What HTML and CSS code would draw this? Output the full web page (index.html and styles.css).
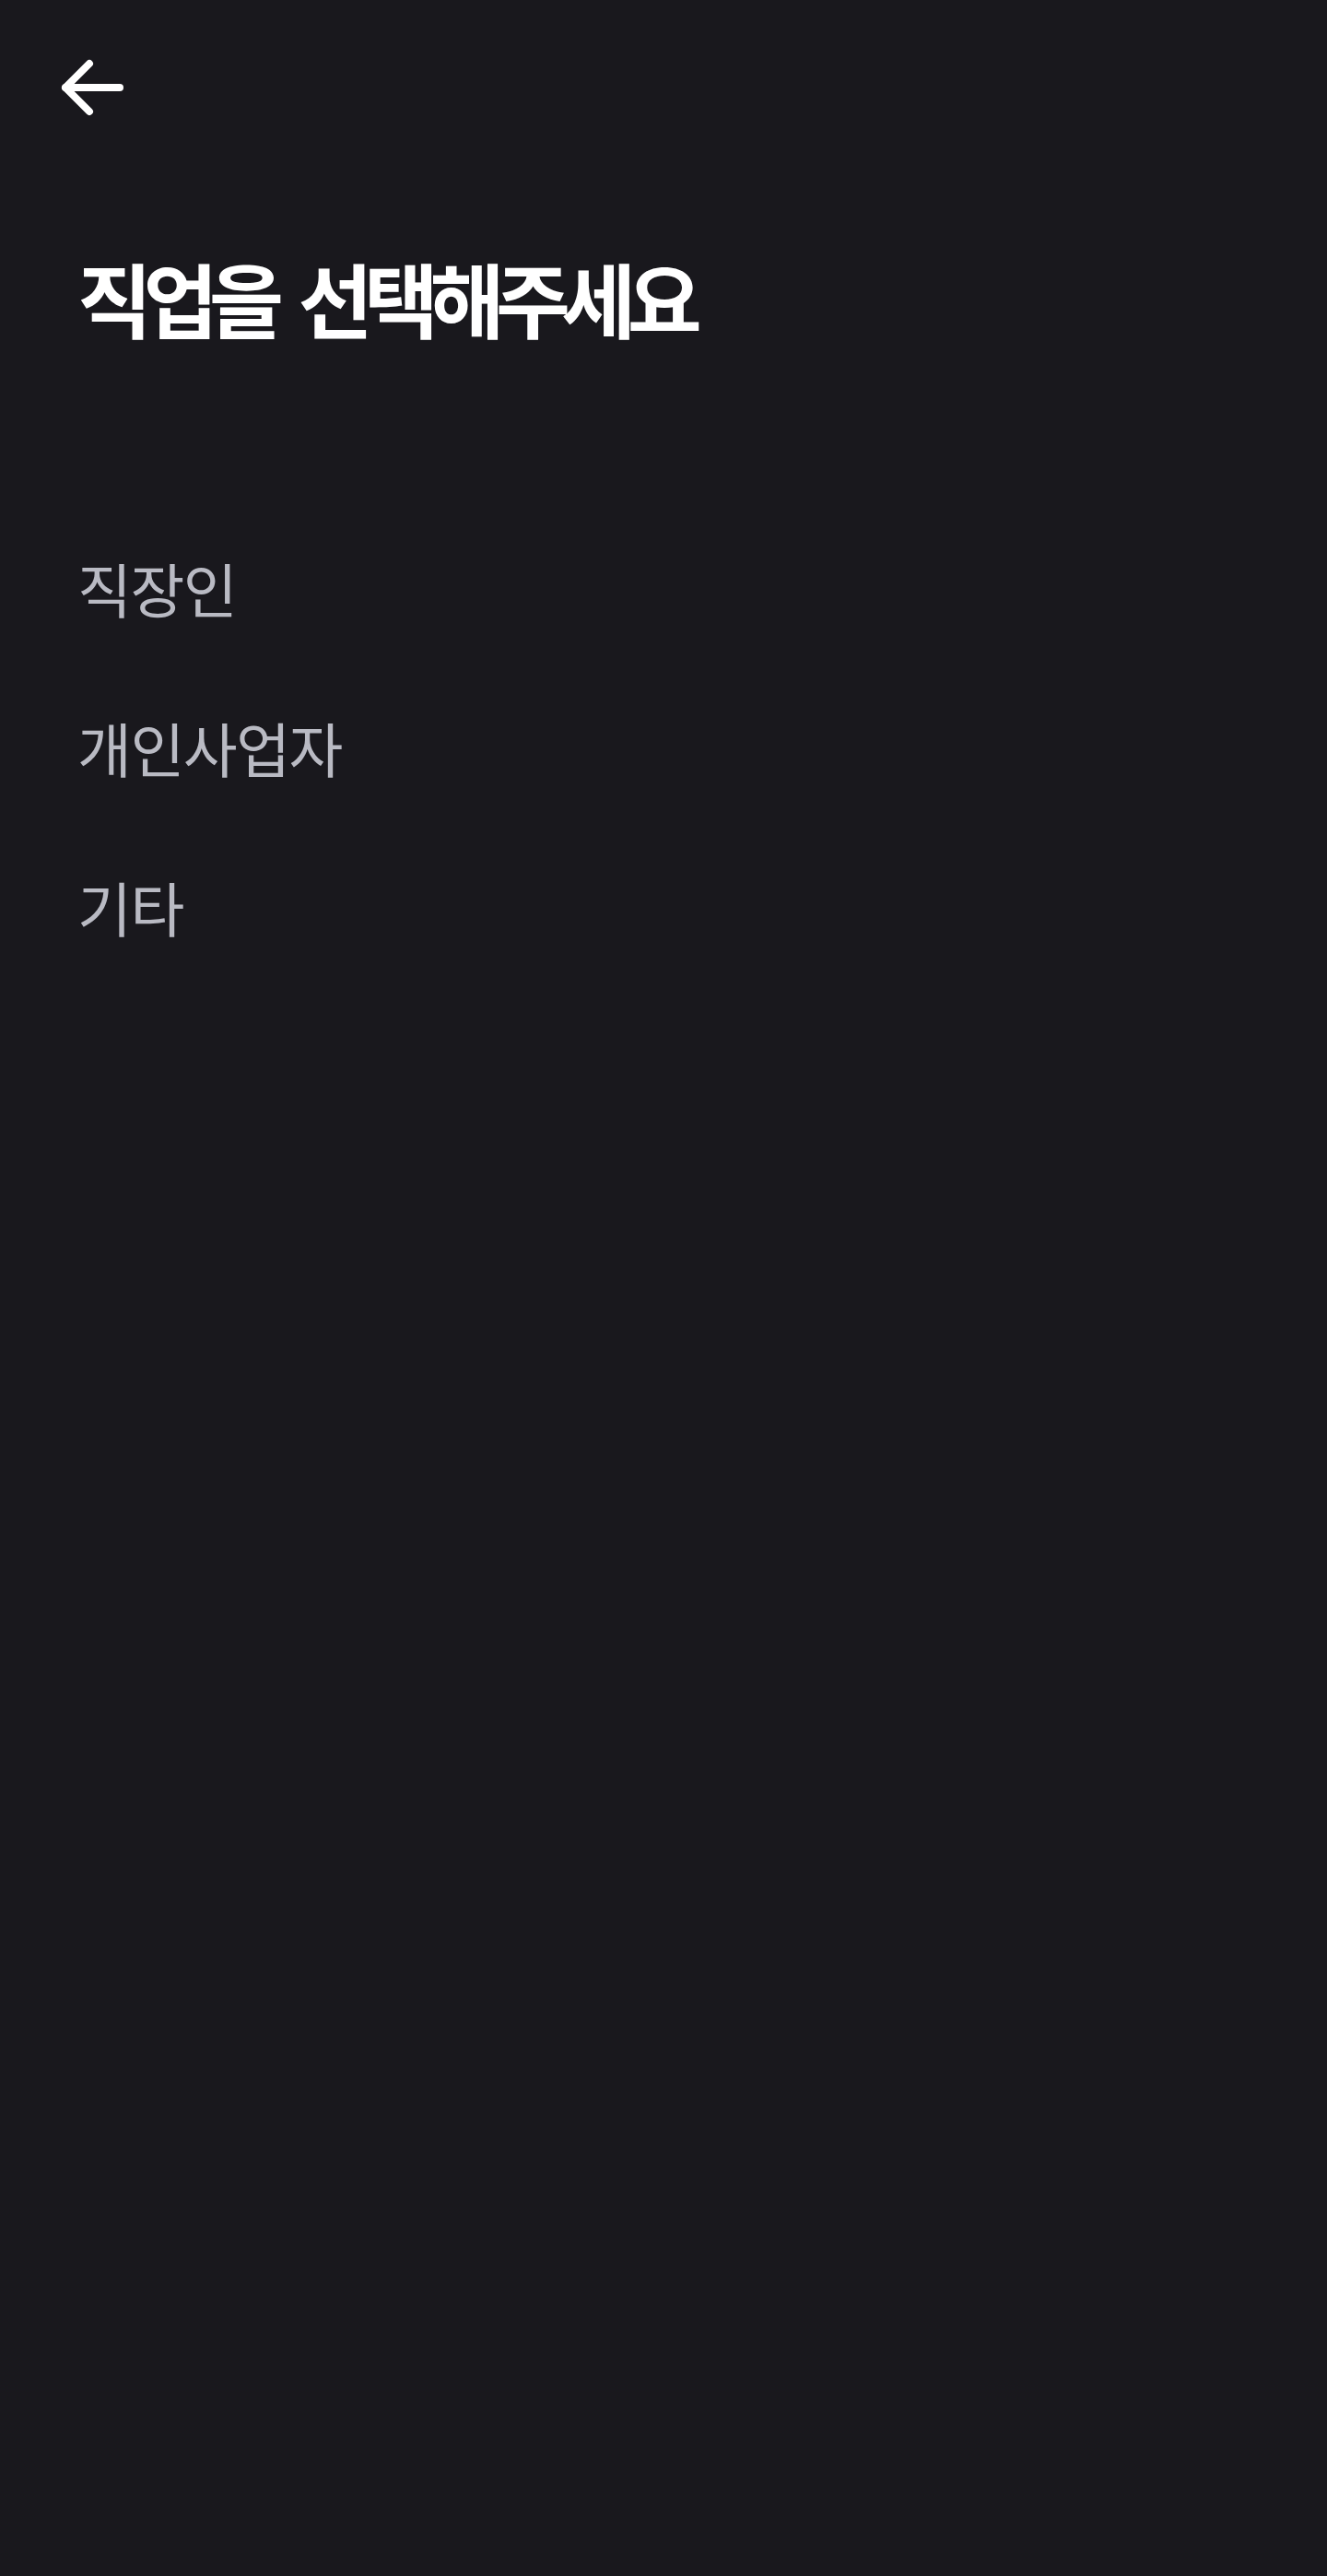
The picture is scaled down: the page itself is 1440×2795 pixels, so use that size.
FILE: index.html
```html
<!DOCTYPE html>
<html lang="ko">
<head>
    <meta charset="UTF-8">
    <meta name="viewport" content="width=device-width, initial-scale=1.0">
    <title>직업 선택</title>
    <link rel="stylesheet" href="styles.css">
</head>
<body>
<div class="page">
    <div class="top-bar">
        <button class="back-btn" type="button" aria-label="뒤로">
            <svg width="80" height="80" viewBox="0 0 80 80" fill="none" stroke="#ffffff" stroke-width="8" stroke-linecap="round" stroke-linejoin="round">
                <path d="M11 39H70"/>
                <path d="M37 13L11 39L37 65"/>
            </svg>
        </button>
    </div>
    <h1 class="title">직업을 선택해주세요</h1>
    <ul class="job-list">
        <li class="job-item">직장인</li>
        <li class="job-item">개인사업자</li>
        <li class="job-item">기타</li>
    </ul>
</div>
</body>
</html>
```

FILE: styles.css
```css
body, html {
    margin: 0;
    padding: 0;
    width: 100%;
    min-height: 100%;
    background: #19181d;
    font-family: "Noto Sans CJK KR", "Noto Sans", sans-serif;
    color: #ffffff;
}
.page {
    min-height: 2795px;
    box-sizing: border-box;
}
.top-bar {
    padding: 56px 0 0 60px;
    height: 80px;
}
.back-btn {
    background: none;
    border: none;
    padding: 0;
    margin: 0;
    display: block;
    cursor: pointer;
}
.back-btn svg {
    display: block;
}
.title {
    margin: 133px 0 0 84px;
    font-size: 88px;
    font-weight: 700;
    line-height: 1.2;
    letter-spacing: -9.5px;
    word-spacing: 10px;
}
.job-list {
    list-style: none;
    margin: 176px 0 0 0;
    padding: 0 0 0 84px;
}
.job-item {
    font-size: 64px;
    font-weight: 400;
    line-height: 173px;
    color: #b9bac3;
    letter-spacing: -1.5px;
}
```
